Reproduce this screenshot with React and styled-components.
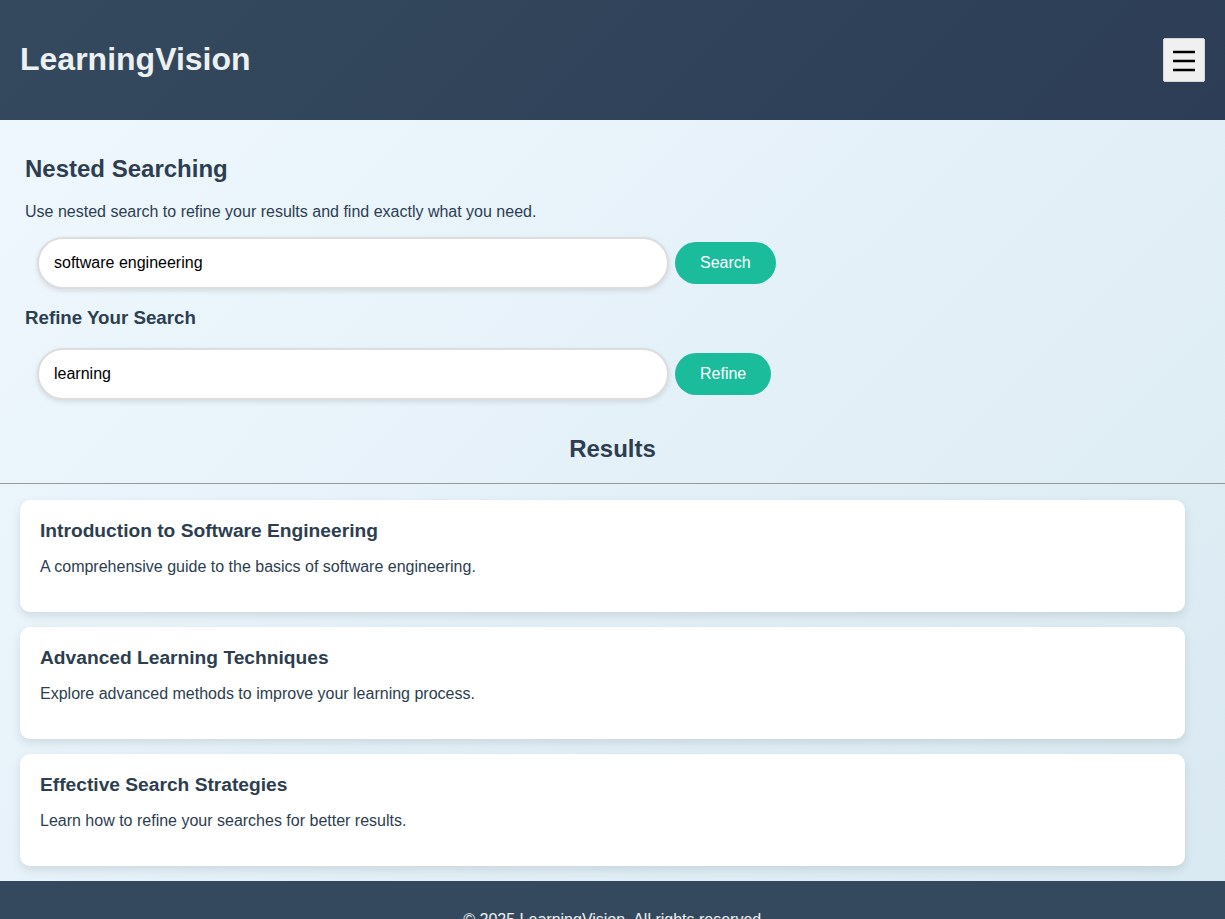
import React from 'react';
import styled, { createGlobalStyle } from 'styled-components';

const GlobalStyle = createGlobalStyle`
    html, body {
        margin: 0;
        padding: 0;
        height: 100%;
        overflow: hidden;
    }
    body {
        font-family: "Liberation Sans", Arial, sans-serif;
        color: #2c3e50;
    }
`;

const Page = styled.div`
    width: 1225px;
    height: 919px;
    overflow: hidden;
    display: flex;
    flex-direction: column;
    background: linear-gradient(135deg, #f0f8ff, #d9e9f1);
`;

const Header = styled.header`
    flex: none;
    height: 120px;
    box-sizing: border-box;
    padding: 0 20px 2px;
    display: flex;
    align-items: center;
    justify-content: space-between;
    background: linear-gradient(135deg, #34495e, #2c3d55);
    color: #ecf0f1;
`;

const Logo = styled.h1`
    margin: 0;
    font-size: 32px;
    font-weight: 700;
`;

const MenuButton = styled.button`
    width: 42px;
    height: 44px;
    padding: 0;
    margin-top: 2px;
    display: flex;
    align-items: center;
    justify-content: center;
    background: #f0f0f0;
    border: 1px solid #d5d5d5;
    border-radius: 2px;
`;

const SearchSection = styled.section`
    flex: none;
    padding: 35px 25px 0;
`;

const Title = styled.h2`
    margin: 0 0 20px;
    font-size: 24px;
    line-height: 28px;
    font-weight: 700;
`;

const Intro = styled.p`
    margin: 0 0 16px;
    font-size: 16px;
    line-height: 18px;
`;

const SearchRow = styled.div`
    display: flex;
    align-items: center;
    gap: 6px;
    padding-left: 12px;
`;

const SearchInput = styled.input`
    width: 632px;
    height: 52px;
    box-sizing: border-box;
    padding: 0 15px;
    border: 2px solid #ddd;
    border-radius: 26px;
    background: #fff;
    box-shadow: 0 2px 5px rgba(0, 0, 0, 0.1);
    color: #000;
    font-family: inherit;
    font-size: 16px;
    outline: none;
`;

const ActionButton = styled.button`
    height: 42px;
    padding: 0 25px;
    border: none;
    border-radius: 21px;
    background: #1abc9c;
    color: #fff;
    font-family: inherit;
    font-size: 16px;
`;

const RefineTitle = styled.h3`
    margin: 17px 0 19px;
    font-size: 18.72px;
    line-height: 23px;
    font-weight: 700;
`;

const ResultsTitle = styled.h2`
    margin: 35px 0 20px;
    text-align: center;
    font-size: 24px;
    line-height: 28px;
    font-weight: 700;
`;

const Divider = styled.hr`
    flex: none;
    margin: 0;
    border: none;
    height: 1px;
    background: #999;
`;

const ResultList = styled.div`
    flex: none;
    display: flex;
    flex-direction: column;
    gap: 15px;
    padding: 16px 40px 15px 20px;
`;

const ResultCard = styled.article`
    height: 112px;
    box-sizing: border-box;
    padding: 19px 20px;
    border-radius: 10px;
    background: #fff;
    box-shadow: 0 4px 10px rgba(0, 0, 0, 0.1);
`;

const ResultName = styled.h3`
    margin: 0 0 16px;
    font-size: 19.2px;
    line-height: 23px;
    font-weight: 700;
`;

const ResultText = styled.p`
    margin: 0;
    font-size: 16px;
    line-height: 18px;
`;

const Footer = styled.footer`
    flex: none;
    height: 100px;
    box-sizing: border-box;
    padding: 30px 0 0 4px;
    text-align: center;
    background: #34495e;
    color: #ecf0f1;
    font-size: 16px;
    line-height: 18px;
`;

const results = [
    { title: 'Introduction to Software Engineering', text: 'A comprehensive guide to the basics of software engineering.' },
    { title: 'Advanced Learning Techniques', text: 'Explore advanced methods to improve your learning process.' },
    { title: 'Effective Search Strategies', text: 'Learn how to refine your searches for better results.' },
];

const MenuIcon = () => (
    <svg width="22" height="24" viewBox="0 0 22 24" aria-hidden="true">
        <path d="M0 5h22M0 14h22M0 23h22" stroke="#000" strokeWidth="2.6" fill="none" transform="translate(0 -1)" />
    </svg>
);

const App = () => (
    <Page>
        <GlobalStyle />
        <Header>
            <Logo>LearningVision</Logo>
            <MenuButton aria-label="Menu">
                <MenuIcon />
            </MenuButton>
        </Header>
        <SearchSection>
            <Title>Nested Searching</Title>
            <Intro>Use nested search to refine your results and find exactly what you need.</Intro>
            <SearchRow>
                <SearchInput defaultValue="software engineering" />
                <ActionButton>Search</ActionButton>
            </SearchRow>
            <RefineTitle>Refine Your Search</RefineTitle>
            <SearchRow>
                <SearchInput defaultValue="learning" />
                <ActionButton>Refine</ActionButton>
            </SearchRow>
            <ResultsTitle>Results</ResultsTitle>
        </SearchSection>
        <Divider />
        <ResultList>
            {results.map((item) => (
                <ResultCard key={item.title}>
                    <ResultName>{item.title}</ResultName>
                    <ResultText>{item.text}</ResultText>
                </ResultCard>
            ))}
        </ResultList>
        <Footer>© 2025 LearningVision. All rights reserved.</Footer>
    </Page>
);

export default App;
